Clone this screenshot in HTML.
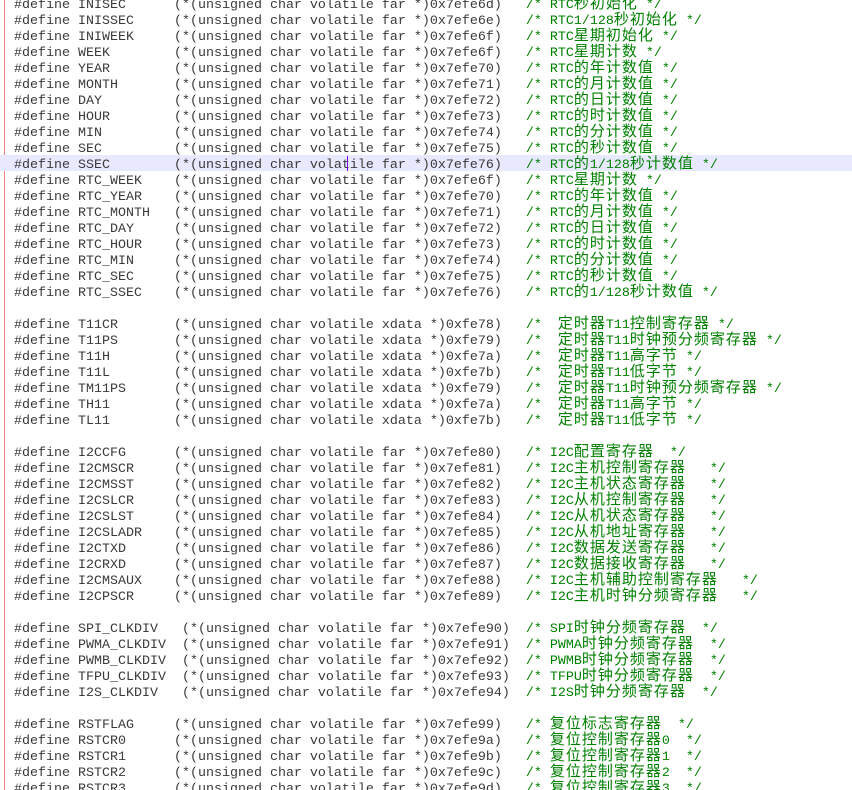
<!DOCTYPE html>
<html><head><meta charset="utf-8"><style>
html,body{margin:0;padding:0;background:#fff;width:852px;height:790px;overflow:hidden;position:relative}
.red{position:absolute;left:4px;top:0;width:1px;height:790px;background:#f08080}
.hl{position:absolute;left:0;top:155px;width:852px;height:16px;background:#e8e8ff}
.cur{position:absolute;left:347px;top:156px;width:1px;height:15px;background:#8000ff}
.c{position:absolute;left:14px;top:-5px;margin:0;font-family:"Liberation Mono",monospace;font-size:13.33px;color:#3a3a3a}
.c p{margin:0;height:16px;line-height:16px;overflow:visible;white-space:pre}
b{font-weight:normal;color:#008000}
s{text-decoration:none;font-family:"Noto Sans CJK SC",sans-serif;font-size:15px;letter-spacing:1px;line-height:16px}
</style></head><body>
<div class="red"></div><div class="hl"></div><div class="cur"></div>
<div class="c">
<p>#define INISEC      (*(unsigned char volatile far *)0x7efe6d)   <b>/* RTC<s>秒初始化</s> */</b></p>
<p>#define INISSEC     (*(unsigned char volatile far *)0x7efe6e)   <b>/* RTC1/128<s>秒初始化</s> */</b></p>
<p>#define INIWEEK     (*(unsigned char volatile far *)0x7efe6f)   <b>/* RTC<s>星期初始化</s> */</b></p>
<p>#define WEEK        (*(unsigned char volatile far *)0x7efe6f)   <b>/* RTC<s>星期计数</s> */</b></p>
<p>#define YEAR        (*(unsigned char volatile far *)0x7efe70)   <b>/* RTC<s>的年计数值</s> */</b></p>
<p>#define MONTH       (*(unsigned char volatile far *)0x7efe71)   <b>/* RTC<s>的月计数值</s> */</b></p>
<p>#define DAY         (*(unsigned char volatile far *)0x7efe72)   <b>/* RTC<s>的日计数值</s> */</b></p>
<p>#define HOUR        (*(unsigned char volatile far *)0x7efe73)   <b>/* RTC<s>的时计数值</s> */</b></p>
<p>#define MIN         (*(unsigned char volatile far *)0x7efe74)   <b>/* RTC<s>的分计数值</s> */</b></p>
<p>#define SEC         (*(unsigned char volatile far *)0x7efe75)   <b>/* RTC<s>的秒计数值</s> */</b></p>
<p>#define SSEC        (*(unsigned char volatile far *)0x7efe76)   <b>/* RTC<s>的</s>1/128<s>秒计数值</s> */</b></p>
<p>#define RTC_WEEK    (*(unsigned char volatile far *)0x7efe6f)   <b>/* RTC<s>星期计数</s> */</b></p>
<p>#define RTC_YEAR    (*(unsigned char volatile far *)0x7efe70)   <b>/* RTC<s>的年计数值</s> */</b></p>
<p>#define RTC_MONTH   (*(unsigned char volatile far *)0x7efe71)   <b>/* RTC<s>的月计数值</s> */</b></p>
<p>#define RTC_DAY     (*(unsigned char volatile far *)0x7efe72)   <b>/* RTC<s>的日计数值</s> */</b></p>
<p>#define RTC_HOUR    (*(unsigned char volatile far *)0x7efe73)   <b>/* RTC<s>的时计数值</s> */</b></p>
<p>#define RTC_MIN     (*(unsigned char volatile far *)0x7efe74)   <b>/* RTC<s>的分计数值</s> */</b></p>
<p>#define RTC_SEC     (*(unsigned char volatile far *)0x7efe75)   <b>/* RTC<s>的秒计数值</s> */</b></p>
<p>#define RTC_SSEC    (*(unsigned char volatile far *)0x7efe76)   <b>/* RTC<s>的</s>1/128<s>秒计数值</s> */</b></p>
<p></p>
<p>#define T11CR       (*(unsigned char volatile xdata *)0xfe78)   <b>/*  <s>定时器</s>T11<s>控制寄存器</s> */</b></p>
<p>#define T11PS       (*(unsigned char volatile xdata *)0xfe79)   <b>/*  <s>定时器</s>T11<s>时钟预分频寄存器</s> */</b></p>
<p>#define T11H        (*(unsigned char volatile xdata *)0xfe7a)   <b>/*  <s>定时器</s>T11<s>高字节</s> */</b></p>
<p>#define T11L        (*(unsigned char volatile xdata *)0xfe7b)   <b>/*  <s>定时器</s>T11<s>低字节</s> */</b></p>
<p>#define TM11PS      (*(unsigned char volatile xdata *)0xfe79)   <b>/*  <s>定时器</s>T11<s>时钟预分频寄存器</s> */</b></p>
<p>#define TH11        (*(unsigned char volatile xdata *)0xfe7a)   <b>/*  <s>定时器</s>T11<s>高字节</s> */</b></p>
<p>#define TL11        (*(unsigned char volatile xdata *)0xfe7b)   <b>/*  <s>定时器</s>T11<s>低字节</s> */</b></p>
<p></p>
<p>#define I2CCFG      (*(unsigned char volatile far *)0x7efe80)   <b>/* I2C<s>配置寄存器</s>  */</b></p>
<p>#define I2CMSCR     (*(unsigned char volatile far *)0x7efe81)   <b>/* I2C<s>主机控制寄存器</s>   */</b></p>
<p>#define I2CMSST     (*(unsigned char volatile far *)0x7efe82)   <b>/* I2C<s>主机状态寄存器</s>   */</b></p>
<p>#define I2CSLCR     (*(unsigned char volatile far *)0x7efe83)   <b>/* I2C<s>从机控制寄存器</s>   */</b></p>
<p>#define I2CSLST     (*(unsigned char volatile far *)0x7efe84)   <b>/* I2C<s>从机状态寄存器</s>   */</b></p>
<p>#define I2CSLADR    (*(unsigned char volatile far *)0x7efe85)   <b>/* I2C<s>从机地址寄存器</s>   */</b></p>
<p>#define I2CTXD      (*(unsigned char volatile far *)0x7efe86)   <b>/* I2C<s>数据发送寄存器</s>   */</b></p>
<p>#define I2CRXD      (*(unsigned char volatile far *)0x7efe87)   <b>/* I2C<s>数据接收寄存器</s>   */</b></p>
<p>#define I2CMSAUX    (*(unsigned char volatile far *)0x7efe88)   <b>/* I2C<s>主机辅助控制寄存器</s>   */</b></p>
<p>#define I2CPSCR     (*(unsigned char volatile far *)0x7efe89)   <b>/* I2C<s>主机时钟分频寄存器</s>   */</b></p>
<p></p>
<p>#define SPI_CLKDIV   (*(unsigned char volatile far *)0x7efe90)  <b>/* SPI<s>时钟分频寄存器</s>  */</b></p>
<p>#define PWMA_CLKDIV  (*(unsigned char volatile far *)0x7efe91)  <b>/* PWMA<s>时钟分频寄存器</s>  */</b></p>
<p>#define PWMB_CLKDIV  (*(unsigned char volatile far *)0x7efe92)  <b>/* PWMB<s>时钟分频寄存器</s>  */</b></p>
<p>#define TFPU_CLKDIV  (*(unsigned char volatile far *)0x7efe93)  <b>/* TFPU<s>时钟分频寄存器</s>  */</b></p>
<p>#define I2S_CLKDIV   (*(unsigned char volatile far *)0x7efe94)  <b>/* I2S<s>时钟分频寄存器</s>  */</b></p>
<p></p>
<p>#define RSTFLAG     (*(unsigned char volatile far *)0x7efe99)   <b>/* <s>复位标志寄存器</s>  */</b></p>
<p>#define RSTCR0      (*(unsigned char volatile far *)0x7efe9a)   <b>/* <s>复位控制寄存器</s>0  */</b></p>
<p>#define RSTCR1      (*(unsigned char volatile far *)0x7efe9b)   <b>/* <s>复位控制寄存器</s>1  */</b></p>
<p>#define RSTCR2      (*(unsigned char volatile far *)0x7efe9c)   <b>/* <s>复位控制寄存器</s>2  */</b></p>
<p>#define RSTCR3      (*(unsigned char volatile far *)0x7efe9d)   <b>/* <s>复位控制寄存器</s>3  */</b></p>
</div>
</body></html>
